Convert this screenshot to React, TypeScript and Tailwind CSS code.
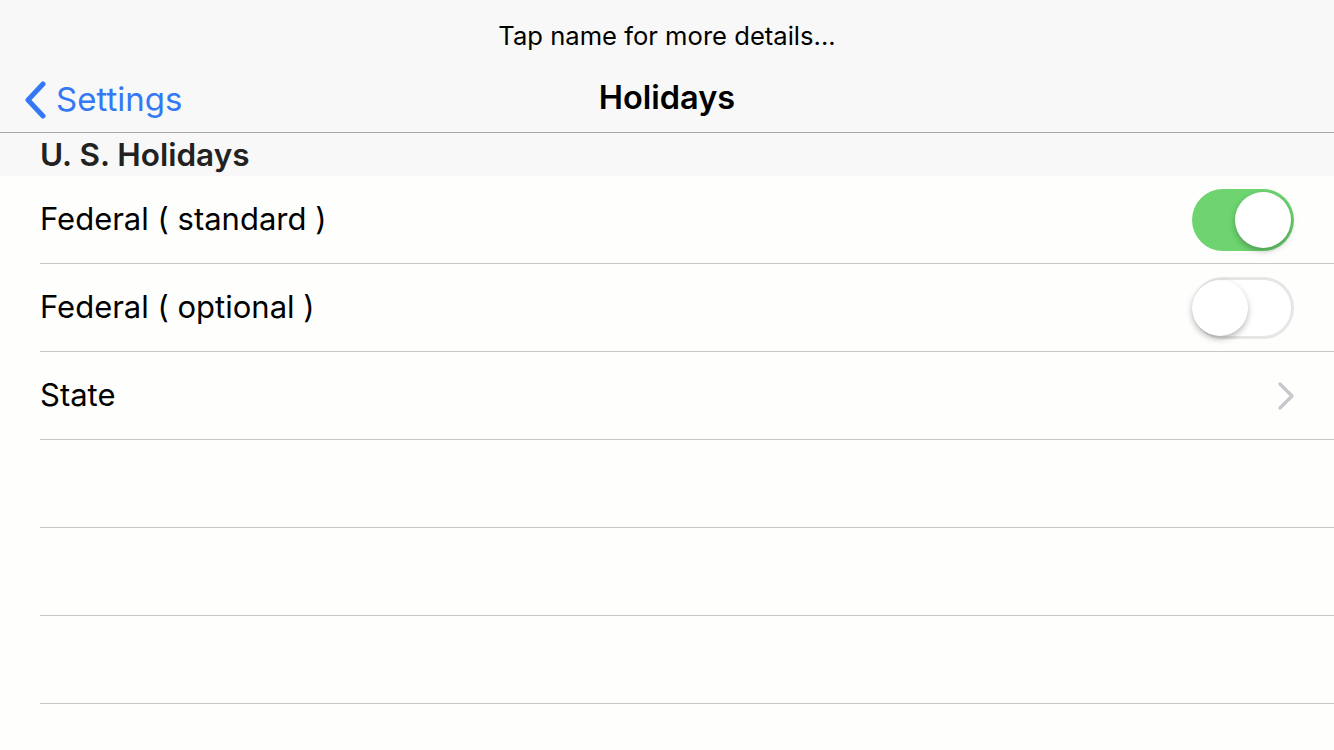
const font = { fontFamily: "Inter, 'Noto Sans', sans-serif" };

function Toggle({ on }: { on: boolean }) {
  return (
    <div
      className={
        "relative h-[62px] w-[102px] rounded-full " +
        (on ? "bg-[#6dd470]" : "border-[3px] border-[#e6e6e6] bg-white")
      }
    >
      <div
        className={
          "absolute h-[56px] w-[56px] rounded-full bg-white shadow-[0_3px_6px_rgba(0,0,0,0.28)] " +
          (on ? "right-[3px] top-[3px]" : "-left-[3px] top-0")
        }
      />
    </div>
  );
}

function Row({ label, children }: { label?: string; children?: React.ReactNode }) {
  return (
    <div className="ml-[40px] flex h-[88px] items-center justify-between border-b border-[#c8c7cc] pr-[40px]">
      <span className="text-[31px] text-black">{label}</span>
      {children}
    </div>
  );
}

export default function App() {
  return (
    <div className="h-[750px] w-[1334px] overflow-hidden bg-[#fefefd]" style={font}>
      {/* Nav bar */}
      <header className="h-[133px] border-b border-[#a8a8a8] bg-[#f7f8f7]">
        <div className="flex h-[70px] items-center justify-center pt-[2px] text-[25.6px] text-black">
          Tap name for more details...
        </div>
        <div className="relative flex h-[56px] items-center justify-center">
          <button className="absolute left-[22px] top-[5px] flex items-center gap-[8px] text-[#3478f6]">
            <svg width="26" height="38" viewBox="0 0 26 38" fill="none">
              <path d="M21 3 L6 19 L21 35" stroke="currentColor" strokeWidth="5" strokeLinecap="round" strokeLinejoin="round" />
            </svg>
            <span className="text-[33px]">Settings</span>
          </button>
          <h1 className="text-[32.5px] font-semibold text-black">Holidays</h1>
        </div>
      </header>

      {/* Section header */}
      <div className="flex h-[43px] items-center bg-[#f7f8f7] pl-[40px]">
        <span className="text-[31.5px] font-semibold text-[#222222]">U. S. Holidays</span>
      </div>

      <Row label="Federal ( standard )">
        <Toggle on />
      </Row>
      <Row label="Federal ( optional )">
        <Toggle on={false} />
      </Row>
      <Row label="State">
        <svg width="18" height="28" viewBox="0 0 18 28" fill="none" className="mr-[-1px]">
          <path d="M3 2 L15 14 L3 26" stroke="#c7c7cc" strokeWidth="3.2" strokeLinecap="round" strokeLinejoin="round" />
        </svg>
      </Row>
      <Row />
      <Row />
      <Row />
    </div>
  );
}
